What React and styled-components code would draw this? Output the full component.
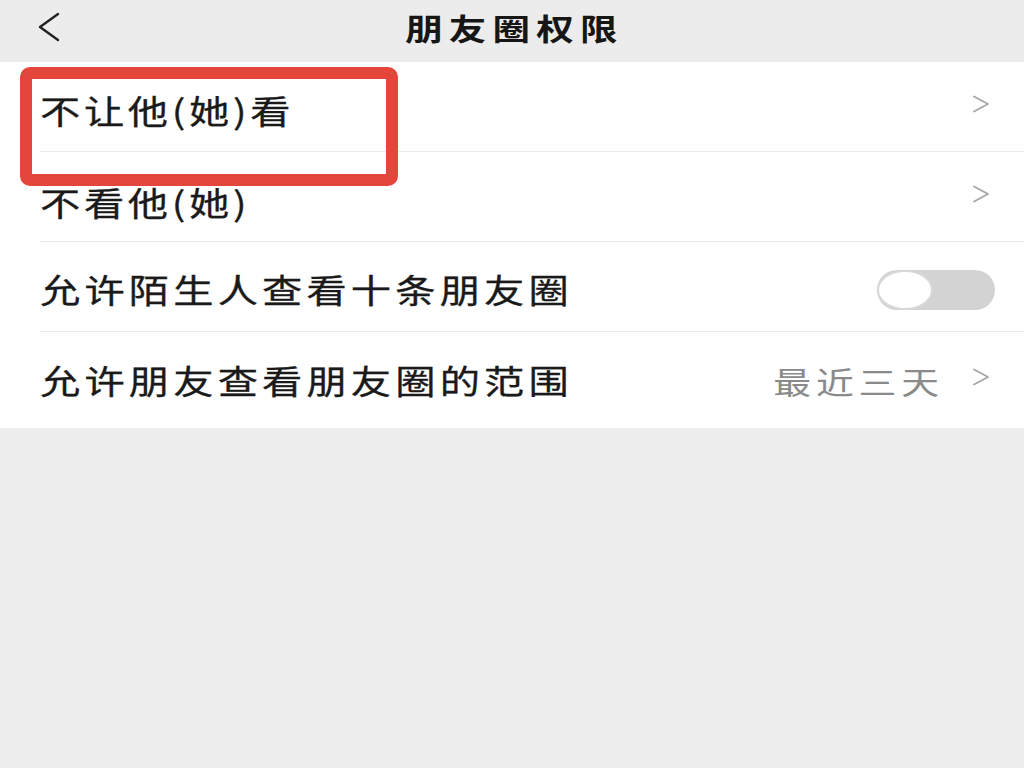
import React from "react";
import styled, { createGlobalStyle } from "styled-components";

const Global = createGlobalStyle`
  html, body { margin: 0; padding: 0; background: #ededed; }
  body { font-family: "Noto Sans CJK SC", "Noto Sans", sans-serif; }
`;

const Page = styled.div`
  width: 1024px;
  height: 768px;
  background: #ededed;
  display: flex;
  flex-direction: column;
  overflow: hidden;
`;

const Header = styled.header`
  height: 62px;
  box-sizing: border-box;
  padding-bottom: 8px;
  flex: none;
  display: grid;
  grid-template-columns: 100px 1fr 100px;
  align-items: center;
  background: #ececec;
  box-shadow: 0 1px 0 #e2e2e2;
`;

const BackBtn = styled.div`
  padding-left: 37px;
  display: flex;
  align-items: center;
`;

const Title = styled.h1`
  margin: 0;
  display: flex;
  justify-content: center;
  padding-left: 4px;
  font-size: 30px;
  font-weight: 700;
  color: #161616;
  line-height: 1;
`;

const Stretch = styled.span`
  display: inline-block;
  white-space: nowrap;
  transform: scaleX(${(p) => p.$sx || 1.22});
  transform-origin: ${(p) => p.$origin || "left"} center;
  letter-spacing: ${(p) => p.$ls}px;
`;

const List = styled.section`
  position: relative;
  background: #fff;
  display: flex;
  flex-direction: column;
`;

const Row = styled.div`
  height: ${(p) => p.$h}px;
  padding-left: 40px;
  display: flex;
`;

const RowInner = styled.div`
  flex: 1;
  display: flex;
  align-items: center;
  justify-content: space-between;
  padding-right: ${(p) => p.$pr}px;
  padding-top: ${(p) => p.$pt}px;
  border-bottom: ${(p) => (p.$last ? "none" : "1px solid #ebebeb")};
`;

const Label = styled.span`
  font-size: 33px;
  font-weight: 400;
  color: #1a1a1a;
  line-height: 1;
  -webkit-text-stroke: 0.3px #1a1a1a;
`;

const Right = styled.div`
  display: flex;
  align-items: center;
  gap: 28px;
`;

const Value = styled.span`
  font-size: 31px;
  color: #8a8a8a;
  line-height: 1;
`;

const ChevronBox = styled.div`
  display: flex;
  margin-bottom: ${(p) => p.$lift || 0}px;
`;

const Switch = styled.div`
  width: 118px;
  height: 40px;
  border-radius: 20px;
  background: #d3d3d3;
  display: flex;
  align-items: center;
`;

const Knob = styled.div`
  width: 56px;
  height: 40px;
  box-sizing: border-box;
  border-radius: 50%;
  background: #fff;
  border: 2px solid #d8d8d8;
`;

const Highlight = styled.div`
  position: absolute;
  left: 20px;
  top: 5px;
  width: 378px;
  height: 119px;
  box-sizing: border-box;
  border: 12px solid #e5463c;
  border-radius: 10px;
  pointer-events: none;
`;

const Chevron = ({ lift }) => (
  <ChevronBox $lift={lift}>
    <svg width="18" height="18" viewBox="0 0 18 18">
      <path d="M2 1.5 L16 9 L2 16.5" fill="none" stroke="#a6a6a6" strokeWidth="1.8" strokeLinecap="round" strokeLinejoin="round" />
    </svg>
  </ChevronBox>
);

const Back = () => (
  <svg width="24" height="30" viewBox="0 0 24 30">
    <path d="M21 2 L3 15 L21 28" fill="none" stroke="#222" strokeWidth="2.4" strokeLinecap="round" strokeLinejoin="round" />
  </svg>
);

export default function App() {
  return (
    <>
      <Global />
      <Page>
        <Header>
          <BackBtn>
            <Back />
          </BackBtn>
          <Title>
            <Stretch $origin="center" $sx={1.25} $ls={5}>朋友圈权限</Stretch>
          </Title>
          <div />
        </Header>
        <List>
          <Row $h={90}>
            <RowInner $pr={34} $pt={8}>
              <Label>
                <Stretch $ls={3}>不让他(她)看</Stretch>
              </Label>
              <Chevron lift={14} />
            </RowInner>
          </Row>
          <Row $h={90}>
            <RowInner $pr={34} $pt={12}>
              <Label>
                <Stretch $ls={3}>不看他(她)</Stretch>
              </Label>
              <Chevron lift={18} />
            </RowInner>
          </Row>
          <Row $h={90}>
            <RowInner $pr={29} $pt={6}>
              <Label>
                <Stretch $ls={3.4}>允许陌生人查看十条朋友圈</Stretch>
              </Label>
              <Switch>
                <Knob />
              </Switch>
            </RowInner>
          </Row>
          <Row $h={96}>
            <RowInner $pr={34} $pt={0} $last>
              <Label>
                <Stretch $ls={3.4}>允许朋友查看朋友圈的范围</Stretch>
              </Label>
              <Right>
                <Value>
                  <Stretch $origin="right" $ls={4}>最近三天</Stretch>
                </Value>
                <Chevron lift={6} />
              </Right>
            </RowInner>
          </Row>
          <Highlight />
        </List>
      </Page>
    </>
  );
}
